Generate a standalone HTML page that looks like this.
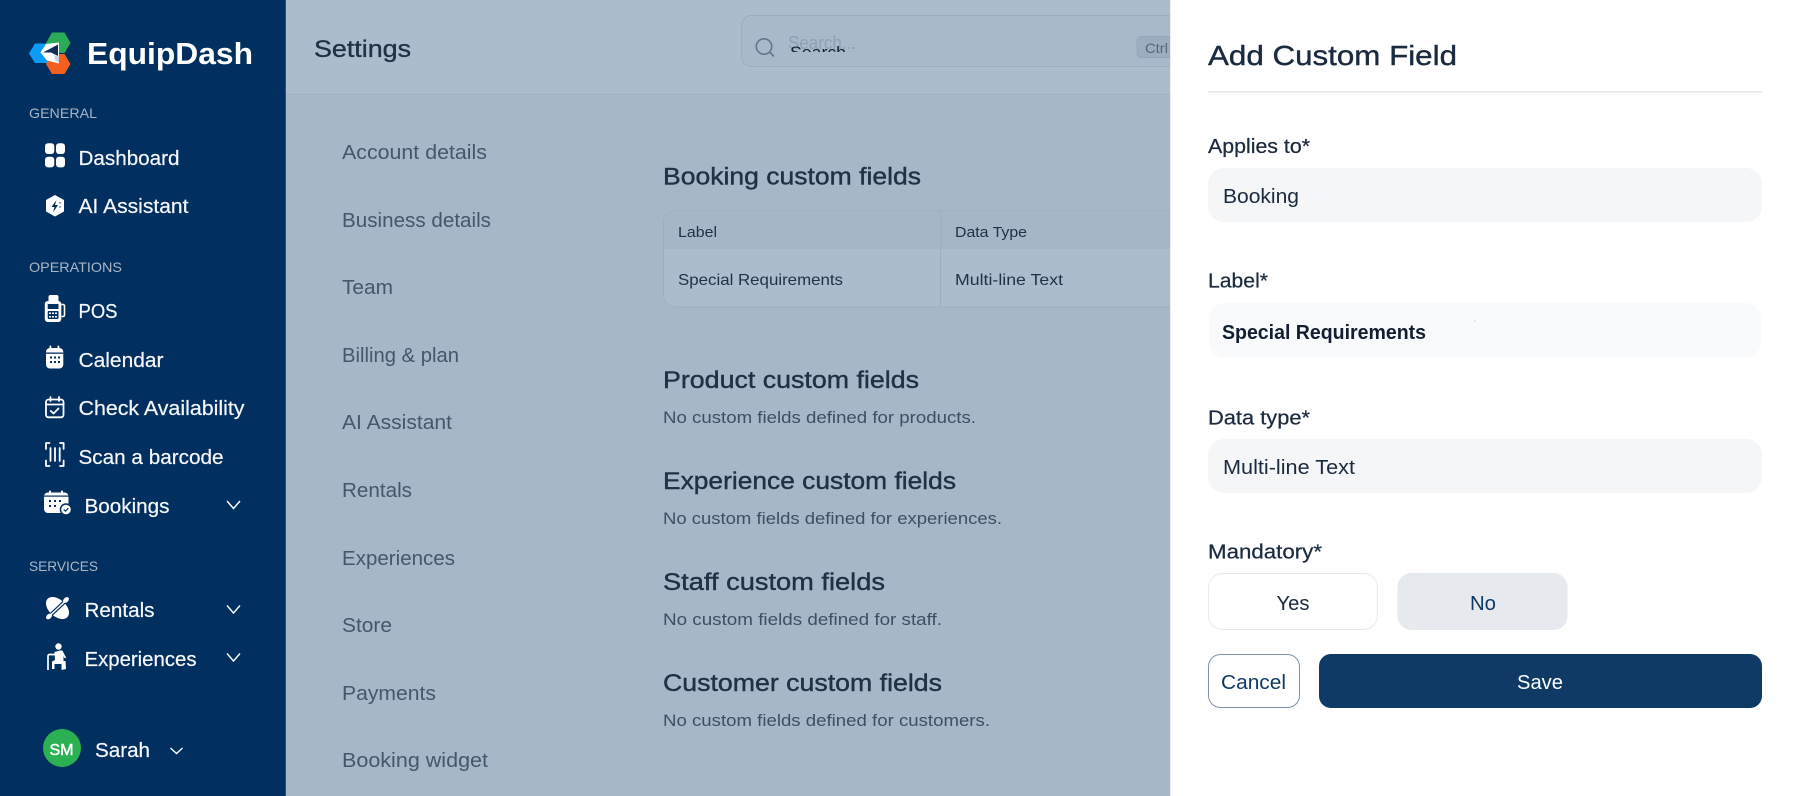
<!DOCTYPE html>
<html lang="en">
<head>
<meta charset="utf-8">
<title>EquipDash – Settings</title>
<style>
html,body{margin:0;padding:0;width:1800px;height:796px;overflow:hidden;background:#a7b7c8}
svg{display:block;filter:blur(.3px)}
text{font-family:"Liberation Sans",sans-serif;white-space:pre}
.nav{fill:#f6f8fb;font-size:20px;stroke:#f6f8fb;stroke-width:.2}
.sec{fill:#a9b6c6;font-size:14px}
.set{fill:#46566b;font-size:20px}
.h{fill:#1f3145;font-size:24px;stroke:#1f3145;stroke-width:.4}
.sub{fill:#3e4f64;font-size:17px}
.lbl{fill:#1b2b3f;font-size:20px;stroke:#1b2b3f;stroke-width:.25}
.val{fill:#1b2b3f;font-size:20px}
</style>
</head>
<body>
<svg xmlns="http://www.w3.org/2000/svg" width="1800" height="796" viewBox="0 0 1800 796">
<defs>
<clipPath id="sc"><rect x="780" y="45" width="90" height="7"/></clipPath>
</defs>

<!-- main background -->
<rect width="1800" height="796" fill="#a7b7c8"/>
<rect x="286" width="1514" height="94" fill="#adbccd"/>
<rect x="286" y="94" width="1514" height="1" fill="#a0b1c3"/>

<!-- sidebar -->
<rect width="285" height="796" fill="#012f5f"/>
<rect x="285" width="1" height="796" fill="#2a5079"/>

<!-- logo -->
<polygon points="29,53.500 35,43.500 48,43.500 53,53.500 48,63 35,63" fill="#0c9cf8"/>
<polygon points="52,32.500 64.500,32.500 70.500,43 64.500,53 52,53 46,43" fill="#2bab55"/>
<polygon points="52,54 64.500,54 70.500,64 64.500,74 52,74 46,64" fill="#f45f20"/>
<polygon points="40.500,52.500 46,44 59,42.500 59,63.500 47,60.500" fill="#fff"/>
<polygon points="43,52.500 58,44.500 58,56 51,52.500" fill="#0f2f55"/>
<polygon points="54,55 59,56.500 59,63 55,60" fill="#c9d2dc"/>
<text x="87" y="64" font-size="31" font-weight="700" fill="#fff" textLength="166" lengthAdjust="spacingAndGlyphs">EquipDash</text>

<!-- section: general -->
<text class="sec" x="29" y="118" textLength="68" lengthAdjust="spacingAndGlyphs">GENERAL</text>
<g fill="#fff">
<rect x="45" y="143.300" width="9.300" height="10.700" rx="3"/>
<rect x="56" y="143.300" width="9" height="10.700" rx="3"/>
<rect x="45" y="156.700" width="9.300" height="10.700" rx="3"/>
<rect x="56" y="156.700" width="9" height="10.700" rx="3"/>
</g>
<text class="nav" x="78.500" y="165" textLength="101" lengthAdjust="spacingAndGlyphs">Dashboard</text>
<polygon points="55,195 64,200 64,211.500 55,216.500 46,211.500 46,200" fill="#fff"/>
<path d="M56.500 200 L51.500 207 H54.500 L53 212.500 L58 205 H55 Z" fill="#012f5f"/>
<circle cx="60" cy="203" r=".7" fill="#012f5f"/><circle cx="60" cy="207" r=".7" fill="#012f5f"/>
<text class="nav" x="78.500" y="213" textLength="110" lengthAdjust="spacingAndGlyphs">AI Assistant</text>

<!-- section: operations -->
<text class="sec" x="29" y="272" textLength="93" lengthAdjust="spacingAndGlyphs">OPERATIONS</text>

<!-- POS -->
<rect x="48.500" y="295" width="10" height="8" rx="2" fill="#fff"/>
<rect x="44.800" y="301" width="16.500" height="21" rx="3" fill="#fff"/>
<path d="M61.500 304.500h1.500a1.500 1.500 0 0 1 1.500 1.500v9a1.500 1.500 0 0 1 -1.500 1.500h-1.500" fill="none" stroke="#fff" stroke-width="1.600"/>
<rect x="47.700" y="304" width="10.800" height="5" fill="#012f5f"/>
<rect x="47.700" y="311" width="10.800" height="8" rx="1" fill="#012f5f"/>
<g fill="#fff"><rect x="49" y="312.500" width="2" height="1.500"/><rect x="52" y="312.500" width="2" height="1.500"/><rect x="55" y="312.500" width="2" height="1.500"/><rect x="49" y="316" width="2" height="1.500"/><rect x="52" y="316" width="2" height="1.500"/><rect x="55" y="316" width="2" height="1.500"/></g>
<text class="nav" x="78.500" y="318" textLength="39" lengthAdjust="spacingAndGlyphs">POS</text>

<!-- Calendar -->
<rect x="46" y="348" width="17.300" height="20.500" rx="4" fill="#fff"/>
<rect x="46" y="352.500" width="17.300" height="1.300" fill="#012f5f"/>
<rect x="49.500" y="345.500" width="1.800" height="5.500" rx=".9" fill="#fff"/><rect x="57.500" y="345.500" width="1.800" height="5.500" rx=".9" fill="#fff"/>
<g fill="#012f5f"><rect x="50" y="356.500" width="2" height="2"/><rect x="54" y="356.500" width="2" height="2"/><rect x="58" y="356.500" width="2" height="2"/><rect x="50" y="361" width="2" height="2"/><rect x="54" y="361" width="2" height="2"/><rect x="58" y="361" width="2" height="2"/></g>
<text class="nav" x="78.500" y="367" textLength="85" lengthAdjust="spacingAndGlyphs">Calendar</text>

<!-- Check availability -->
<g fill="none" stroke="#fff" stroke-width="1.800" stroke-linecap="round" stroke-linejoin="round">
<rect x="46" y="399.500" width="17.500" height="17.800" rx="2.500"/>
<path d="M46 404.500H63.500M50.500 397v4M59 397v4"/>
<path d="M50.800 411l2.700 2.500 5-5"/>
</g>
<text class="nav" x="78.500" y="415" textLength="166" lengthAdjust="spacingAndGlyphs">Check Availability</text>

<!-- Scan -->
<g fill="none" stroke="#fff" stroke-width="1.800" stroke-linecap="round" stroke-linejoin="round">
<path d="M49.500 443H46v6M60 443h3.600v6M46 460.500v5.500h3.500M63.600 460.500v5.500H60"/>
<path d="M50.500 448v13M55 448v13M59.700 448v13"/>
</g>
<text class="nav" x="78.500" y="464" textLength="145" lengthAdjust="spacingAndGlyphs">Scan a barcode</text>

<!-- Bookings -->
<rect x="44" y="492.500" width="24.500" height="20.500" rx="4" fill="#fff"/>
<rect x="49" y="490.500" width="2" height="4" rx="1" fill="#fff"/><rect x="61" y="490.500" width="2" height="4" rx="1" fill="#fff"/>
<rect x="44" y="495.500" width="24.500" height="1.200" fill="#012f5f"/>
<g fill="#012f5f"><rect x="49" y="500" width="2" height="2"/><rect x="54" y="500" width="2" height="2"/><rect x="59" y="500" width="2" height="2"/><rect x="49" y="505" width="2" height="2"/><rect x="54" y="505" width="2" height="2"/></g>
<circle cx="66" cy="509.500" r="6.300" fill="#012f5f"/>
<circle cx="66" cy="509.500" r="4.800" fill="#fff"/>
<path d="M63.800 509.500l1.700 1.700 2.900-3" fill="none" stroke="#012f5f" stroke-width="1.200"/>
<text class="nav" x="84.500" y="513" textLength="85" lengthAdjust="spacingAndGlyphs">Bookings</text>
<path d="M227 501l6.500 7.500 6.500-7.500" fill="none" stroke="#fff" stroke-width="1.400"/>

<!-- section: services -->
<text class="sec" x="29" y="571" textLength="69" lengthAdjust="spacingAndGlyphs">SERVICES</text>

<!-- Rentals -->
<ellipse cx="57.500" cy="608" rx="13.500" ry="8.500" transform="rotate(42 57.500 608)" fill="#fff"/>
<path d="M48.500 617L66.500 600" stroke="#012f5f" stroke-width="3.800"/>
<path d="M49 616.500L66 600.500" stroke="#fff" stroke-width="1.500"/>
<ellipse cx="49" cy="616.500" rx="3.400" ry="2.300" transform="rotate(-42 49 616.500)" fill="#fff"/>
<ellipse cx="66" cy="600" rx="3.400" ry="2.300" transform="rotate(-42 66 600)" fill="#fff"/>
<text class="nav" x="84.500" y="617" textLength="70" lengthAdjust="spacingAndGlyphs">Rentals</text>
<path d="M227 605.500l6.500 7.500 6.500-7.500" fill="none" stroke="#fff" stroke-width="1.400"/>

<!-- Experiences -->
<circle cx="58.500" cy="646.500" r="3.200" fill="#fff"/>
<path d="M48 670V656a1.500 1.500 0 0 1 1.500-1.500H55" fill="none" stroke="#fff" stroke-width="1.700"/>
<path d="M54.500 652l5.500 -1.500c2.500 -.5 3.500 1 3.500 3v7.500h2L66 669l-4.500 1v-6h-7v5H52v-7.500l3 -1.500z" fill="#fff"/>
<path d="M61.500 651l4 7" stroke="#fff" stroke-width="1.600"/>
<text class="nav" x="84.500" y="666" textLength="112" lengthAdjust="spacingAndGlyphs">Experiences</text>
<path d="M227 653.500l6.500 7.500 6.500-7.500" fill="none" stroke="#fff" stroke-width="1.400"/>

<!-- user -->
<circle cx="62" cy="748" r="19" fill="#2bb152"/>
<text x="49.500" y="755" font-size="16" fill="#fff" stroke="#fff" stroke-width=".5" textLength="24" lengthAdjust="spacingAndGlyphs">SM</text>
<text class="nav" x="95" y="757" textLength="55" lengthAdjust="spacingAndGlyphs">Sarah</text>
<path d="M170.500 748l6 5.500 6-5.500" fill="none" stroke="#fff" stroke-width="1.400"/>

<!-- header -->
<text x="314" y="57" font-size="24" fill="#1f3145" stroke="#1f3145" stroke-width=".35" textLength="97" lengthAdjust="spacingAndGlyphs">Settings</text>
<rect x="741.500" y="15.500" width="600" height="51" rx="10" fill="#a9b9ca" stroke="#9cadc0"/>
<circle cx="764" cy="46.500" r="7.700" fill="none" stroke="#62778e" stroke-width="1.600"/>
<path d="M770 52.500l3.500 3.500" stroke="#62778e" stroke-width="1.600" stroke-linecap="round"/>
<text x="788" y="49" font-size="18" fill="#8fa0b4" textLength="68" lengthAdjust="spacingAndGlyphs">Search...</text>
<text x="790" y="58" font-size="17" fill="#15202e" clip-path="url(#sc)" textLength="56" lengthAdjust="spacingAndGlyphs">Search</text>
<rect x="1137" y="36.500" width="60" height="21" rx="4" fill="#9dadbf" stroke="#94a6ba"/>
<text x="1145" y="53" font-size="14" fill="#55677c" textLength="23" lengthAdjust="spacingAndGlyphs">Ctrl</text>

<!-- settings nav -->
<text class="set" x="342" y="159" textLength="145" lengthAdjust="spacingAndGlyphs">Account details</text>
<text class="set" x="342" y="227" textLength="149" lengthAdjust="spacingAndGlyphs">Business details</text>
<text class="set" x="342" y="294" textLength="51" lengthAdjust="spacingAndGlyphs">Team</text>
<text class="set" x="342" y="362" textLength="117" lengthAdjust="spacingAndGlyphs">Billing &amp; plan</text>
<text class="set" x="342" y="429" textLength="110" lengthAdjust="spacingAndGlyphs">AI Assistant</text>
<text class="set" x="342" y="497" textLength="70" lengthAdjust="spacingAndGlyphs">Rentals</text>
<text class="set" x="342" y="565" textLength="113" lengthAdjust="spacingAndGlyphs">Experiences</text>
<text class="set" x="342" y="632" textLength="50" lengthAdjust="spacingAndGlyphs">Store</text>
<text class="set" x="342" y="700" textLength="94" lengthAdjust="spacingAndGlyphs">Payments</text>
<text class="set" x="342" y="767" textLength="146" lengthAdjust="spacingAndGlyphs">Booking widget</text>

<!-- custom fields content -->
<text class="h" x="663" y="184.500" textLength="258" lengthAdjust="spacingAndGlyphs">Booking custom fields</text>
<rect x="663.500" y="210.500" width="600" height="96.500" rx="12" fill="#adbccd" stroke="#9dafc1"/>
<path d="M664 249V222.500a12 12 0 0 1 12-12H1263V249Z" fill="#a6b6c7"/>
<rect x="940" y="211" width="1.200" height="96" fill="#9dafc1"/>
<text x="678" y="237" font-size="15" fill="#1f3145" textLength="39" lengthAdjust="spacingAndGlyphs">Label</text>
<text x="955" y="237" font-size="15" fill="#1f3145" textLength="72" lengthAdjust="spacingAndGlyphs">Data Type</text>
<text x="678" y="285" font-size="16" fill="#1f3145" textLength="165" lengthAdjust="spacingAndGlyphs">Special Requirements</text>
<text x="955" y="285" font-size="16" fill="#1f3145" textLength="108" lengthAdjust="spacingAndGlyphs">Multi-line Text</text>

<text class="h" x="663" y="388" textLength="256" lengthAdjust="spacingAndGlyphs">Product custom fields</text>
<text class="sub" x="663" y="423" textLength="313" lengthAdjust="spacingAndGlyphs">No custom fields defined for products.</text>
<text class="h" x="663" y="489" textLength="293" lengthAdjust="spacingAndGlyphs">Experience custom fields</text>
<text class="sub" x="663" y="524" textLength="339" lengthAdjust="spacingAndGlyphs">No custom fields defined for experiences.</text>
<text class="h" x="663" y="590" textLength="222" lengthAdjust="spacingAndGlyphs">Staff custom fields</text>
<text class="sub" x="663" y="625" textLength="279" lengthAdjust="spacingAndGlyphs">No custom fields defined for staff.</text>
<text class="h" x="663" y="691" textLength="279" lengthAdjust="spacingAndGlyphs">Customer custom fields</text>
<text class="sub" x="663" y="726" textLength="327" lengthAdjust="spacingAndGlyphs">No custom fields defined for customers.</text>

<!-- drawer panel -->
<rect x="1170" width="630" height="796" fill="#fff"/>
<rect x="1170" width="1" height="796" fill="#eceef1"/>
<text x="1208" y="65" font-size="28" fill="#1b2b3f" stroke="#1b2b3f" stroke-width=".4" textLength="249" lengthAdjust="spacingAndGlyphs">Add Custom Field</text>
<rect x="1208" y="91" width="554" height="1.500" fill="#e2e5ea"/>

<text class="lbl" x="1208" y="153" textLength="102" lengthAdjust="spacingAndGlyphs">Applies to*</text>
<rect x="1208" y="168" width="554" height="54" rx="16" fill="#f5f6f8"/>
<text class="val" x="1223" y="203" textLength="76" lengthAdjust="spacingAndGlyphs">Booking</text>

<text class="lbl" x="1208" y="287.500" textLength="60" lengthAdjust="spacingAndGlyphs">Label*</text>
<rect x="1209" y="303" width="552" height="55" rx="16" fill="#f9fafb"/>
<circle cx="1475" cy="321" r=".7" fill="#c9ccd1"/>
<text x="1222" y="339" font-size="20" font-weight="700" fill="#111f30" textLength="204" lengthAdjust="spacingAndGlyphs">Special Requirements</text>

<text class="lbl" x="1208" y="424.500" textLength="102" lengthAdjust="spacingAndGlyphs">Data type*</text>
<rect x="1208" y="439" width="554" height="54" rx="16" fill="#f5f6f8"/>
<text class="val" x="1223" y="474" textLength="132" lengthAdjust="spacingAndGlyphs">Multi-line Text</text>

<text class="lbl" x="1208" y="558.500" textLength="114" lengthAdjust="spacingAndGlyphs">Mandatory*</text>
<rect x="1208.500" y="573.500" width="169" height="56" rx="14" fill="#fff" stroke="#e8eaee"/>
<text class="val" x="1276.500" y="610" textLength="33" lengthAdjust="spacingAndGlyphs">Yes</text>
<rect x="1397.500" y="573" width="170" height="57" rx="14" fill="#e6e9ee"/>
<text x="1470" y="610" font-size="20" fill="#0f3a66" textLength="26" lengthAdjust="spacingAndGlyphs">No</text>

<rect x="1208.500" y="654.500" width="91" height="53" rx="12" fill="#fff" stroke="#7d92ad"/>
<text x="1221" y="689" font-size="20" fill="#0f3a66" textLength="65" lengthAdjust="spacingAndGlyphs">Cancel</text>
<rect x="1319" y="654" width="443" height="54" rx="12" fill="#0f3a66"/>
<text x="1517" y="689" font-size="20" fill="#fff" textLength="46" lengthAdjust="spacingAndGlyphs">Save</text>
</svg>
</body>
</html>
